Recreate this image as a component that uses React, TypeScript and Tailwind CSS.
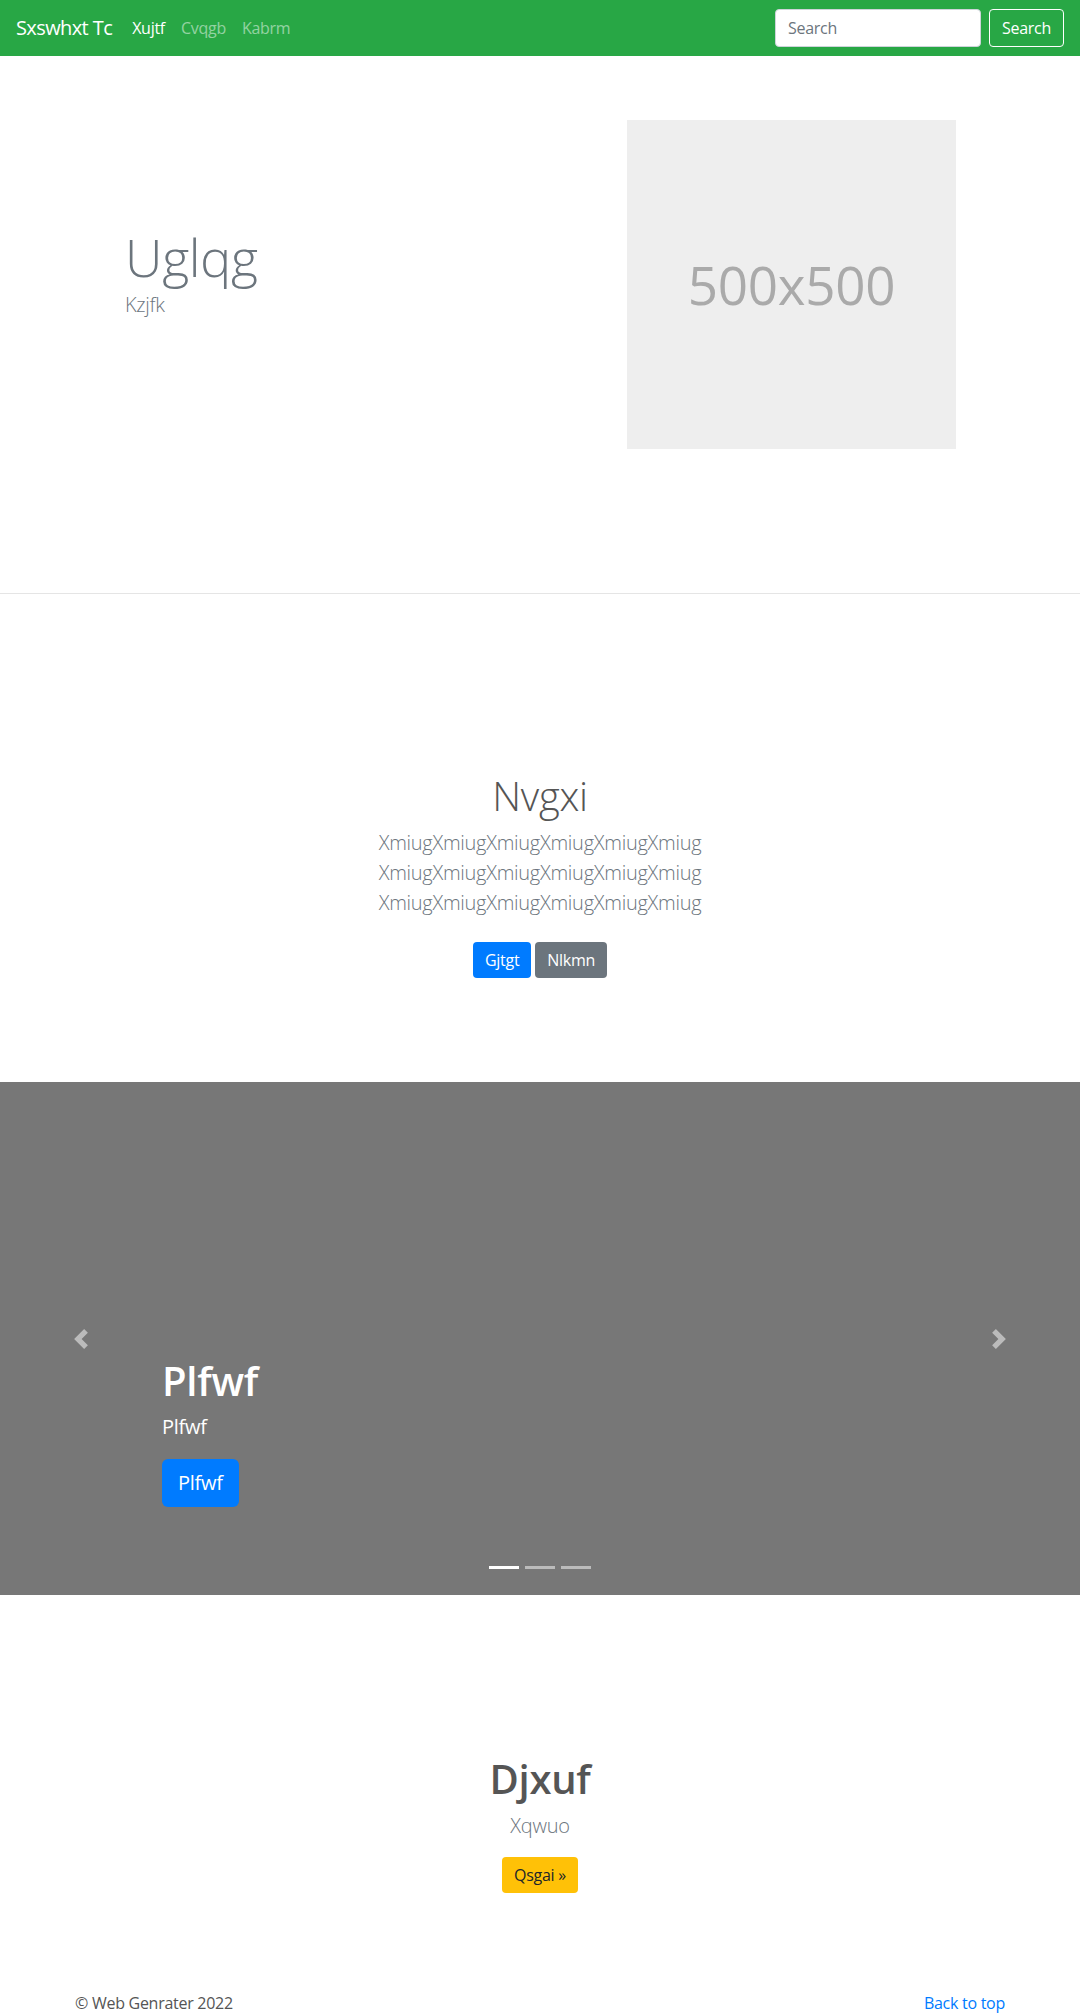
import React from 'react';

const font = "font-['Open_Sans','Noto_Sans',sans-serif] tracking-[-0.017em]";

const PrevIcon = () => (
  <svg width="20" height="20" viewBox="0 0 8 8" fill="#fff">
    <path d="M5.25 0l-4 4 4 4 1.5-1.5L4.25 4l2.5-2.5L5.25 0z" />
  </svg>
);

const NextIcon = () => (
  <svg width="20" height="20" viewBox="0 0 8 8" fill="#fff">
    <path d="M2.75 0l-1.5 1.5L3.75 4l-2.5 2.5L2.75 8l4-4-4-4z" />
  </svg>
);

const Navbar: React.FC = () => (
  <nav className="flex h-14 items-center bg-[#28a745] px-4">
    <a className="mr-3 text-[20px] leading-[30px] tracking-[-0.03em] text-white">Sxswhxt Tc</a>
    <ul className="flex items-center">
      <li className="px-2 text-base text-white">Xujtf</li>
      <li className="px-2 text-base text-white/50">Cvqgb</li>
      <li className="px-2 text-base text-white/50">Kabrm</li>
    </ul>
    <form className="ml-auto flex items-center">
      <input
        placeholder="Search"
        className="mr-2 h-[38px] w-[206px] rounded border border-[#ced4da] bg-white px-3 text-base text-[#495057] placeholder:text-[#6c757d] outline-none"
      />
      <button className="h-[38px] rounded border border-white px-3 text-base text-white">Search</button>
    </form>
  </nav>
);

const Hero: React.FC = () => (
  <section className="border-b border-[#e5e5e5] pt-16 pb-[144px]">
    <div className="mx-auto flex w-[960px] items-center px-[15px]">
      <div className="mb-[18px] flex-1 pl-[50px]">
        <h1 className="mb-[14px] text-[52px] font-light leading-[44px] text-[#6c757d]">Uglqg</h1>
        <p className="text-[20px] font-light leading-6 text-[#6c757d]">Kzjfk</p>
      </div>
      <div className="mr-[49px] flex h-[329px] w-[329px] items-center justify-center bg-[#eeeeee]">
        <span className="text-[53px] leading-none text-[#aaaaaa]">500x500</span>
      </div>
    </div>
  </section>
);

const Intro: React.FC = () => (
  <section className="pt-[178px] pb-[96px] text-center">
    <div className="mx-auto w-[450px]">
      <h1 className="mb-2 text-[40px] font-light leading-[1.2] text-[#555]">Nvgxi</h1>
      <p className="mb-4 text-[20px] font-light leading-[30px] text-[#6c757d]">
        XmiugXmiugXmiugXmiugXmiugXmiug XmiugXmiugXmiugXmiugXmiugXmiug XmiugXmiugXmiugXmiugXmiugXmiug
      </p>
      <p className="flex justify-center gap-1">
        <a className="my-2 rounded bg-[#007bff] px-3 py-1.5 text-base leading-6 text-white">Gjtgt</a>
        <a className="my-2 rounded bg-[#6c757d] px-3 py-1.5 text-base leading-6 text-white">Nlkmn</a>
      </p>
    </div>
  </section>
);

const Carousel: React.FC = () => (
  <section className="relative h-[513px] bg-[#777]">
    <div className="absolute inset-y-0 left-0 flex w-[15%] items-center justify-center opacity-50">
      <PrevIcon />
    </div>
    <div className="absolute inset-y-0 right-0 flex w-[15%] items-center justify-center opacity-50">
      <NextIcon />
    </div>
    <div className="absolute right-[15%] bottom-[88px] left-[15%] text-left text-white">
      <h1 className="mb-[7px] text-[40px] font-semibold leading-[1.2]">Plfwf</h1>
      <p className="mb-[17px] text-[20px] leading-[30px]">Plfwf</p>
      <a className="inline-block rounded-md bg-[#007bff] px-4 py-[9px] text-[20px] leading-[30px] text-white">Plfwf</a>
    </div>
    <ol className="absolute bottom-[26px] left-0 flex w-full justify-center">
      <li className="mx-[3px] h-[3px] w-[30px] bg-white" />
      <li className="mx-[3px] h-[3px] w-[30px] bg-white opacity-50" />
      <li className="mx-[3px] h-[3px] w-[30px] bg-white opacity-50" />
    </ol>
  </section>
);

const Feature: React.FC = () => (
  <section className="pt-[160px] pb-[50px] text-center">
    <h1 className="mb-2 text-[40px] font-semibold leading-[1.2] text-[#555]">Djxuf</h1>
    <p className="mb-4 text-[20px] font-light leading-[30px] text-[#6c757d]">Xqwuo</p>
    <a className="inline-block rounded bg-[#ffc107] px-3 py-1.5 text-base leading-6 text-[#212529]">Qsgai »</a>
  </section>
);

const Footer: React.FC = () => (
  <footer className="mx-auto flex w-[960px] justify-between px-[15px] py-12 text-base leading-6">
    <p className="text-[#555]">© Web Genrater 2022</p>
    <a className="text-[#007bff]">Back to top</a>
  </footer>
);

export default function App() {
  return (
    <div className={`${font} min-h-screen bg-white`}>
      <Navbar />
      <Hero />
      <Intro />
      <Carousel />
      <Feature />
      <Footer />
    </div>
  );
}
